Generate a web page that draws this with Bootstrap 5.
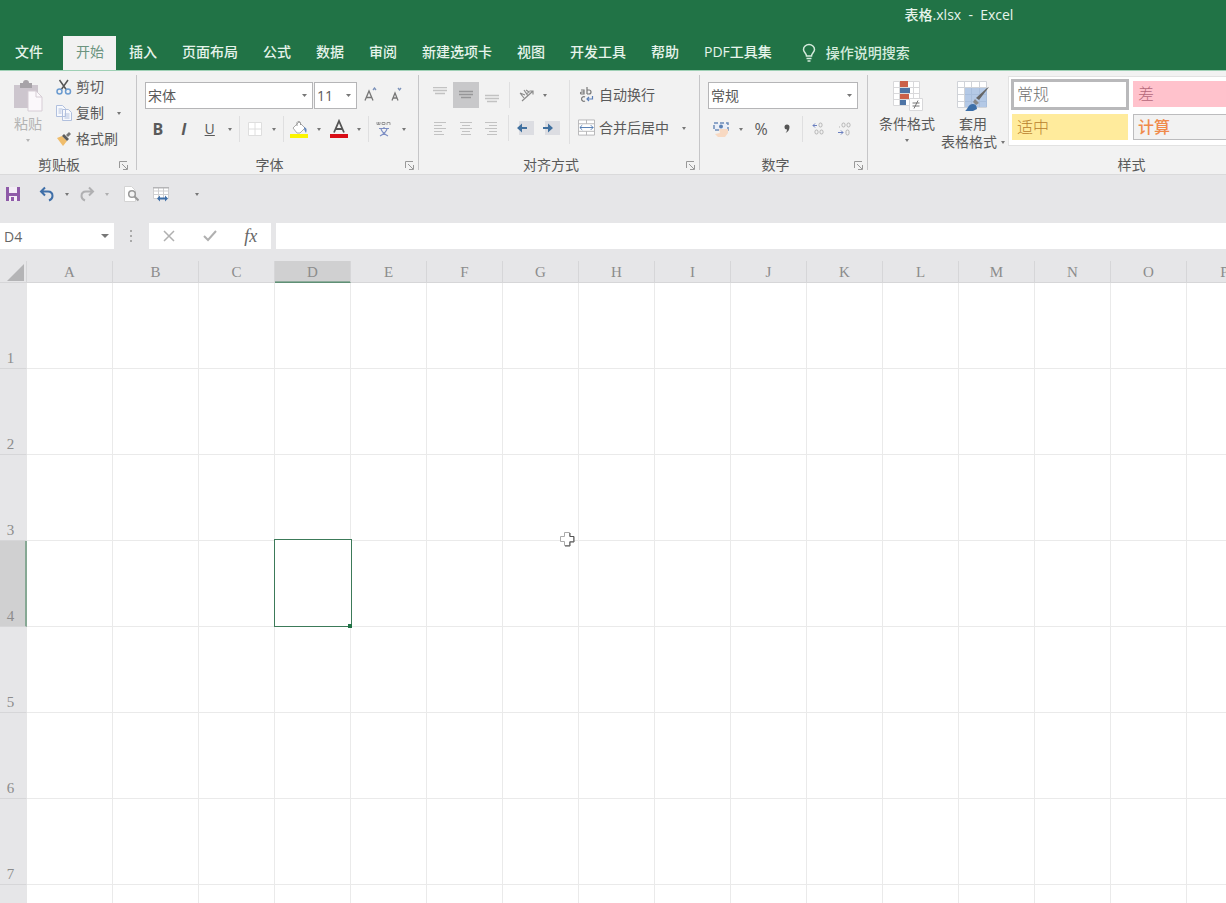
<!DOCTYPE html>
<html lang="zh-CN">
<head>
<meta charset="utf-8">
<meta name="viewport" content="width=device-width, initial-scale=1">
<title>表格.xlsx - Excel</title>
<link href="https://cdn.jsdelivr.net/npm/bootstrap@5.3.0/dist/css/bootstrap.min.css" rel="stylesheet">
<style>
  :root { --xl-green: #217346; --xl-panel: #f2f2f2; --xl-shell: #e6e6e8; --xl-ink: #5a5a5a; }
  body { font-family: "Open Sans", "Noto Sans CJK SC", sans-serif; font-size: 14px; line-height: 20px; color: var(--xl-ink); background: var(--xl-shell); }
  svg { display: block; flex: none; }
  button { color: inherit; }

  /* title and tabs */
  .xl-top { background: var(--xl-green); color: #e6f3eb; font-weight: 500; }
  .xl-title { min-width: 1918px; height: 36px; line-height: 30px; white-space: pre; }
  .xl-tabs { height: 34px; white-space: nowrap; }
  .xl-tabs .nav-link { color: #e6f3eb; height: 34px; padding: 0 12px 0 13px; line-height: 32px; border-radius: 0; }
  .xl-tabs .nav-link.xl-file { padding: 0 20px 0 15px; }
  .xl-tabs .nav-link.active { background: var(--xl-panel); color: #6c9480; font-weight: 400; }
  .xl-tellme { color: #d5ebdd; font-weight: 500; }

  /* ribbon */
  .xl-ribbon { background: var(--xl-panel); border-top: 1px solid #9fd0b5; border-bottom: 1px solid #dadadb; height: 105px; }
  .xl-group { padding: 5px 8px 0; position: relative; flex: none; }
  .xl-group + .xl-group::before { content: ""; position: absolute; left: -1px; top: 4px; bottom: 4px; border-left: 1px solid #c6c6c8; }
  .xl-body { height: 79px; }
  .xl-caption { line-height: 20px; height: 20px; margin: 0 -7px 0 -8px; }
  .xl-btn { border: 0; background: none; padding: 0; display: flex; align-items: center; justify-content: center; white-space: nowrap; line-height: 18px; }
  .xl-tool { width: 26px; height: 26px; }
  .xl-line { height: 26px; }
  .xl-tool.active { background: #c8c8ca; }
  .xl-drop { width: 14px; height: 26px; }
  .xl-drop::after, .xl-caret::after { content: ""; border: 2px solid transparent; border-top: 3px solid #777; border-bottom: 0; }
  .xl-rule { width: 1px; height: 26px; margin: 0 2px; background: #dfdfe0; }
  .xl-rule-tall { width: 1px; height: 64px; background: #dfdfe0; }
  .xl-select { appearance: none; height: 27px; border: 1px solid #b5b5b7; border-radius: 0; padding: 0 2px; color: #5a5a5a; font-size: 14px;
    background: #fff url("data:image/svg+xml,%3Csvg xmlns='http://www.w3.org/2000/svg' viewBox='0 0 5 3'%3E%3Cpath d='M0 0h5L2.5 3z' fill='%23777'/%3E%3C/svg%3E") no-repeat right 5px center / 5px 3px; }
  .xl-rows { padding-top: 6px; gap: 7px; }
  .xl-g1 { width: 137px; } .xl-g2 { width: 282px; } .xl-g3 { width: 281px; } .xl-g4 { width: 168px; } .xl-g5 { width: 528px; }
  .xl-font { width: 168px; } .xl-size { width: 43px; margin-left: 1px; } .xl-number { width: 150px; }
  .xl-align { width: 138px; }
  .xl-align .xl-drop { width: 10px; }
  .xl-paste { width: 40px; color: #b4b4b4; padding-top: 4px; }
  .xl-paste.xl-caret-off::after { opacity: .5; }
  .xl-clips { margin-top: -2px; }
  .xl-clip { height: 26px; gap: 4px; }
  .xl-big { padding-top: 4px; width: 62px; }
  .xl-label { padding-top: 3px; }
  .xl-label-gap { margin-bottom: 6px; }
  .xl-gallery { width: 370px; height: 70px; background: #fff; border: 1px solid #e2e2e2; padding: 2px; gap: 5px 3px; display: grid; grid-template-columns: 118px 118px; grid-template-rows: 30px 26px; align-items: center; }
  .xl-style { height: 26px; border: 1px solid transparent; padding: 0 4px; text-align: left; font-size: 16px; line-height: 20px; font-weight: 300; margin: 0 1px; }
  .xl-style-normal { height: 31px; border: 3px solid #b9b9bb; background: #fff; color: #707070; margin: 0; padding: 0 3px; }
  .xl-style-bad { background: #ffc2cc; color: #b5687a; }
  .xl-style-neutral { background: #ffeb9c; color: #b8802c; }
  .xl-style-calc { background: #f2f2f2; border-color: #bcbcbe; color: #f08a4b; font-weight: 500; }

  /* quick access and formula bars */
  .xl-qat { height: 48px; padding: 6px 0 16px; }
  .xl-formula { height: 26px; }
  .xl-formula input { border: 0; height: 26px; background: #fff; padding: 0 4px; color: #666; border-radius: 0; }
  .xl-name { width: 114px; background: #fff; }
  .xl-dots { width: 35px; }
  .xl-fx { background: #fff; width: 122px; margin-right: 5px; }
  .xl-fx .xl-btn { flex: 1; height: 26px; }
  .xl-fx em { font: italic 18px/20px "Liberation Serif", serif; color: #666; }
  .xl-caret { display: flex; align-items: center; }
  .xl-name .xl-caret { width: 19px; justify-content: center; }
  .xl-name .xl-caret::after { border: 4px solid transparent; border-top: 4px solid #777; border-bottom: 0; }

  /* sheet */
  .xl-sheet { margin-top: 12px; position: relative; background: #fff; }
  .xl-grid { table-layout: fixed; border-collapse: separate; border-spacing: 0; width: 0; }
  .xl-grid th { background: var(--xl-shell); font: 400 15px/20px "Liberation Serif", "Noto Sans CJK SC", serif; color: #8c8c8c; text-align: center; padding: 0; border: 0 solid #d6d6d8; }
  .xl-grid thead th { height: 22px; border-width: 0 1px 1px 0; padding-top: 1px; }
  .xl-grid thead th.picked { background: #d0d0d1; border-bottom-color: #5f8f75; box-shadow: inset 0 -1px #8fac9c; }
  .xl-grid tbody th { height: 86px; vertical-align: bottom; border-width: 0 1px 1px 0; border-right-color: #e6e6e7; padding-right: 5px; }
  .xl-grid tbody th.picked { background: #d0d0d1; border-right: 2px solid #86a894; padding-right: 4px; }
  .xl-grid td { padding: 0; border: 0 solid #eaeaea; border-width: 0 1px 1px 0; position: relative; }
  .xl-grid td.picked::after { content: ""; position: absolute; inset: -2px -2px -1px -1px; border: 1px solid #3c7a59; box-shadow: inset 0 0 0 1px #fff; }
  .xl-handle { position: absolute; right: -2px; bottom: -2px; width: 4px; height: 4px; background: var(--xl-green); z-index: 1; }
  .xl-pointer { position: absolute; left: 558px; top: 269px; }
</style>
</head>
<body>
<div class="vh-100 d-flex flex-column overflow-hidden">

  <header class="xl-top flex-shrink-0">
    <div class="overflow-hidden"><div class="xl-title text-center">表格.xlsx  -  Excel</div></div>
    <nav class="nav xl-tabs flex-nowrap overflow-hidden">
      <a class="nav-link xl-file" href="#">文件</a>
      <a class="nav-link active" href="#" aria-current="page">开始</a>
      <a class="nav-link" href="#">插入</a>
      <a class="nav-link" href="#">页面布局</a>
      <a class="nav-link" href="#">公式</a>
      <a class="nav-link" href="#">数据</a>
      <a class="nav-link" href="#">审阅</a>
      <a class="nav-link" href="#">新建选项卡</a>
      <a class="nav-link" href="#">视图</a>
      <a class="nav-link" href="#">开发工具</a>
      <a class="nav-link" href="#">帮助</a>
      <a class="nav-link" href="#">PDF工具集</a>
      <button class="xl-btn xl-tellme ms-3" type="button">
        <svg class="me-2" width="18" height="20" viewBox="0 0 18 20" fill="none" stroke="#d5ebdd" stroke-width="1.5"><path d="M6.500 13c0-3-3-3.500-3-6.500a5.500 5 0 0 1 11 0c0 3-3 3.500-3 6.500zM6.500 15.500h5M7.500 18h3"/></svg>操作说明搜索
      </button>
    </nav>
  </header>

  <section class="xl-ribbon d-flex flex-shrink-0 overflow-hidden">
    <div class="xl-group xl-g1">
      <div class="xl-body d-flex">
        <button class="xl-btn xl-paste flex-column justify-content-start" type="button">
          <svg width="30" height="32" viewBox="0 0 30 32"><path d="M1 5h24v23H1z" fill="#cdc6ce"/><path d="M7 3h3a3 3 0 0 1 6 0h3v5H7z" fill="#a7a3a8"/><path d="M15 11h8l6 6v14H15z" fill="#fbf8fb" stroke="#d6cdd5"/><path d="M23 11v6h6" fill="none" stroke="#d6cdd5"/></svg>
          <span class="xl-label xl-label-gap">粘贴</span><span class="xl-caret opacity-50"></span>
        </button>
        <div class="xl-clips ms-2">
          <button class="xl-btn xl-clip" type="button"><svg width="16" height="16" viewBox="0 0 16 16" fill="none" stroke-width="1.5"><path d="M3.500 1l7 10M12 1L5 11" stroke="#555"/><circle cx="3.500" cy="12.500" r="2.500" stroke="#6b9bd0"/><circle cx="12" cy="12.500" r="2.500" stroke="#6b9bd0"/></svg>剪切</button>
          <div class="d-flex">
            <button class="xl-btn xl-clip" type="button"><svg width="16" height="16" viewBox="0 0 16 16" fill="#f7f9fd" stroke="#b1c0de"><path d="M.500.500h6l3 3v8h-9zM6.500 4.500h6l3 3v8h-9z"/><path d="M2.500 4h4M2.500 6h3M2.500 8h3M8.500 9h5M8.500 11h5M8.500 13h5"/></svg>复制</button>
            <button class="xl-btn xl-drop ms-2" type="button" aria-label="复制选项"></button>
          </div>
          <button class="xl-btn xl-clip" type="button"><svg width="16" height="16" viewBox="0 0 16 16"><path d="M1 7l5-2 5 5-4 5z" fill="#f0bd6c"/><path d="M6 5l2-2 5 5-2 2z" fill="#5c5c5c"/><path d="M10 4l3-3 2 2-3 3z" fill="#777"/></svg>格式刷</button>
        </div>
      </div>
      <div class="xl-caption d-flex"><span class="flex-grow-1 text-center">剪贴板</span>
        <button class="xl-btn me-1" type="button" aria-label="剪贴板设置"><svg width="14" height="12" viewBox="2 0 14 12" fill="none" stroke="#999"><path d="M3.500 9V2.500H11M6 5l5 5M11.500 6v4.500H7"/></svg></button></div>
    </div>

    <div class="xl-group xl-g2">
      <div class="xl-body xl-rows d-flex flex-column">
        <div class="d-flex">
          <select class="xl-select xl-font" aria-label="字体"><option>宋体</option></select>
          <select class="xl-select xl-size" aria-label="字号"><option>11</option></select>
          <button class="xl-btn xl-tool" type="button" aria-label="增大字号"><svg width="16" height="16" viewBox="0 0 16 16" fill="none" stroke="#777" stroke-width="1.300"><path d="M3 13.500L7 4l4 9.500M4.500 10.500h5"/><path d="M11 3l1.500-2L14 3" stroke="#7d93bb"/></svg></button>
          <button class="xl-btn xl-tool" type="button" aria-label="减小字号"><svg width="16" height="16" viewBox="0 0 16 16" fill="none" stroke="#777" stroke-width="1.300"><path d="M4 13.500L7 6l3 7.500M5 11h4"/><path d="M10 1l1.500 2L13 1" stroke="#7d93bb"/></svg></button>
        </div>
        <div class="d-flex">
          <button class="xl-btn xl-tool fs-6 fw-bold" type="button">B</button>
          <button class="xl-btn xl-tool fs-6 fw-bold fst-italic" type="button">I</button>
          <button class="xl-btn xl-tool text-decoration-underline" type="button">U</button>
          <button class="xl-btn xl-drop" type="button" aria-label="下划线选项"></button>
          <span class="xl-rule"></span>
          <button class="xl-btn xl-tool" type="button" aria-label="边框"><svg width="16" height="16" viewBox="0 0 16 16" fill="#fff" stroke="#dedede"><path d="M1.500 1.500h13v13h-13zM8 1.500v13M1.500 8h13"/></svg></button>
          <button class="xl-btn xl-drop" type="button" aria-label="边框选项"></button>
          <span class="xl-rule"></span>
          <button class="xl-btn xl-tool" type="button" aria-label="填充颜色"><svg width="20" height="20" viewBox="0 0 20 20"><path d="M4 9l6-6 6 6-5 5H8z" fill="#fff" stroke="#aaa"/><path d="M8 7V3.500a2 2 0 0 1 3.500 0V6" fill="none" stroke="#999"/><path d="M15 8c3 1 3 3 2 6-1-2-2-3-2-6z" fill="#6287bd"/><path d="M1 15h18v4H1z" fill="#fbf400"/></svg></button>
          <button class="xl-btn xl-drop" type="button" aria-label="填充颜色选项"></button>
          <button class="xl-btn xl-tool" type="button" aria-label="字体颜色"><svg width="20" height="20" viewBox="0 0 20 20"><path d="M5 13.500L10 2l5 11.500M6.500 10h7" fill="none" stroke="#555" stroke-width="1.800"/><path d="M1 15h18v4H1z" fill="#d90d16"/></svg></button>
          <button class="xl-btn xl-drop" type="button" aria-label="字体颜色选项"></button>
          <span class="xl-rule"></span>
          <button class="xl-btn xl-tool" type="button" aria-label="拼音指南"><svg width="16" height="18" viewBox="0 0 16 18" fill="none"><path d="M1 2v2.500h3V2M2.500 2v2.500M6 2.500h3v2H6zM11 5V2.500h3V5" stroke="#999"/><path d="M3 8.500h10M8 7v2M5 9c1 3 3 5 7 7M11 9c-1 3-3 5-7 7" stroke="#7d8fc4" stroke-width="1.200"/></svg></button>
          <button class="xl-btn xl-drop" type="button" aria-label="拼音选项"></button>
        </div>
      </div>
      <div class="xl-caption d-flex"><span class="flex-grow-1 text-center">字体</span>
        <button class="xl-btn" type="button" aria-label="字体设置"><svg width="16" height="12" viewBox="0 0 16 12" fill="none" stroke="#999"><path d="M3.500 9V2.500H11M6 5l5 5M11.500 6v4.500H7"/></svg></button></div>
    </div>

    <div class="xl-group xl-g3">
      <div class="xl-body d-flex">
        <div class="xl-rows xl-align d-flex flex-column">
          <div class="d-flex">
            <button class="xl-btn xl-tool" type="button" aria-label="顶端对齐"><svg width="14" height="16" stroke="#c2c2c2"><path d="M0 .500h14M0 3.500h14M2 6.500h10" stroke-width="1.500"/></svg></button>
            <button class="xl-btn xl-tool active" type="button" aria-label="垂直居中"><svg width="14" height="16" stroke="#969698"><path d="M0 4.500h14M0 7.500h14M2 10.500h10" stroke-width="1.500"/></svg></button>
            <button class="xl-btn xl-tool" type="button" aria-label="底端对齐"><svg width="14" height="16" stroke="#c2c2c2"><path d="M0 8.500h14M0 11.500h14M2 14.500h10" stroke-width="1.500"/></svg></button>
            <span class="xl-rule mx-1"></span>
            <button class="xl-btn xl-tool" type="button" aria-label="方向"><svg width="18" height="16" viewBox="0 0 18 16" fill="none" stroke="#8b8b8b" stroke-width="1.200"><path d="M2 6l4 5M2 6l5 2M6 3l4 6M8 3l3 2-3 2M4 14L15 4M11.500 4H15v3.500"/></svg></button>
            <button class="xl-btn xl-drop" type="button" aria-label="方向选项"></button>
          </div>
          <div class="d-flex">
            <button class="xl-btn xl-tool" type="button" aria-label="左对齐"><svg width="14" height="16" stroke="#c2c2c2"><path d="M1 2.500h12M1 5.500h8M1 8.500h12M1 11.500h8M1 14.500h10"/></svg></button>
            <button class="xl-btn xl-tool" type="button" aria-label="居中"><svg width="14" height="16" stroke="#c2c2c2"><path d="M1 2.500h12M3 5.500h8M1 8.500h12M3 11.500h8M2 14.500h10"/></svg></button>
            <button class="xl-btn xl-tool" type="button" aria-label="右对齐"><svg width="14" height="16" stroke="#c2c2c2"><path d="M1 2.500h12M5 5.500h8M1 8.500h12M5 11.500h8M3 14.500h10"/></svg></button>
            <span class="xl-rule mx-1"></span>
            <button class="xl-btn xl-tool" type="button" aria-label="减少缩进"><svg width="18" height="16" viewBox="0 0 18 16"><path d="M2 1h15v14H2z" fill="#dcdde2"/><path d="M0 8l5-4.500V7h5v2H5v3.500z" fill="#40709f"/></svg></button>
            <button class="xl-btn xl-tool" type="button" aria-label="增加缩进"><svg width="18" height="16" viewBox="0 0 18 16"><path d="M2 1h15v14H2z" fill="#dcdde2"/><path d="M10 8L5 3.500V7H0v2h5v3.500z" fill="#40709f"/></svg></button>
          </div>
        </div>
        <div class="pt-1 ms-1 flex-shrink-0"><span class="xl-rule-tall d-block"></span></div>
        <div class="xl-rows d-flex flex-column ms-2">
          <button class="xl-btn xl-line justify-content-start" type="button"><svg class="me-1" width="17" height="18" viewBox="1 0 17 18" fill="none" stroke="#777" stroke-width="1.200"><path d="M4 4h3v4H4.500a1 1 0 0 1 0-2H7M10 1v7M10 4h2a2 2 0 0 1 0 4h-2M8 11a2.300 2.300 0 1 0 0 4"/><path d="M15.500 10v3H10M12 11l-2 2 2 2" stroke="#5b7fb8"/></svg>自动换行</button>
          <div class="d-flex">
            <button class="xl-btn xl-line" type="button"><svg class="me-1" width="17" height="18" viewBox="0 0 18 18" fill="#fff" stroke="#b5b5b7"><path d="M.500.500h17v16H.500zM.500 4.500h17M.500 12.500h17M9 .500v4M9 12.500v4"/><path d="M2 8.500h14M4.500 6L2 8.500 4.500 11M13.500 6L16 8.500 13.500 11" fill="none" stroke="#5079b0"/></svg>合并后居中</button>
            <button class="xl-btn xl-drop ms-2" type="button" aria-label="合并选项"></button>
          </div>
        </div>
      </div>
      <div class="xl-caption d-flex"><span class="flex-grow-1 text-center">对齐方式</span>
        <button class="xl-btn" type="button" aria-label="对齐设置"><svg width="16" height="12" viewBox="0 0 16 12" fill="none" stroke="#999"><path d="M3.500 9V2.500H11M6 5l5 5M11.500 6v4.500H7"/></svg></button></div>
    </div>

    <div class="xl-group xl-g4">
      <div class="xl-body xl-rows d-flex flex-column">
        <select class="xl-select xl-number" aria-label="数字格式"><option>常规</option></select>
        <div class="d-flex">
          <button class="xl-btn xl-tool" type="button" aria-label="会计数字格式"><svg width="18" height="18" viewBox="0 0 18 18"><path d="M2 3h14v7H2z" fill="#e9eef7" stroke="#6c8cb9" stroke-width="1.500" stroke-dasharray="4 2"/><circle cx="9" cy="6.500" r="2" fill="#5d81b3"/><path d="M7 9h9v4l-3 4H6l-3-3 5-1z" fill="#f8d9c2"/></svg></button>
          <button class="xl-btn xl-drop" type="button" aria-label="货币选项"></button>
          <button class="xl-btn xl-tool fs-6" type="button">%</button>
          <button class="xl-btn xl-tool" type="button" aria-label="千位分隔样式"><svg width="8" height="12" viewBox="0 0 8 12"><path d="M4 1.500a2.500 2.500 0 0 1 2.500 2.500c0 3-1.500 5-4 6 1-1.200 1.500-2.200 1.500-3.500A2.500 2.500 0 0 1 4 1.500z" fill="#555"/></svg></button>
          <span class="xl-rule"></span>
          <button class="xl-btn xl-tool" type="button" aria-label="增加小数位数"><svg width="14" height="16" viewBox="0 0 14 16" fill="none" stroke="#b3b3b3"><path d="M6 4.500H2M4 2.500l-2 2 2 2" stroke="#6a7fc0"/><rect x="8" y="2" width="3" height="4" rx="1.500"/><rect x="4" y="9" width="3" height="4" rx="1.500"/><rect x="9" y="9" width="3" height="4" rx="1.500"/></svg></button>
          <button class="xl-btn xl-tool" type="button" aria-label="减少小数位数"><svg width="16" height="16" viewBox="0 0 16 16" fill="none" stroke="#b3b3b3"><rect x="6" y="2" width="3" height="4" rx="1.500"/><rect x="11" y="2" width="3" height="4" rx="1.500"/><path d="M3 6h1"/><path d="M2 11.500h5M5 9.500l2 2-2 2" stroke="#6a7fc0"/><rect x="10" y="9" width="3" height="5" rx="1.500"/></svg></button>
        </div>
      </div>
      <div class="xl-caption d-flex"><span class="flex-grow-1 text-center">数字</span>
        <button class="xl-btn" type="button" aria-label="数字设置"><svg width="16" height="12" viewBox="0 0 16 12" fill="none" stroke="#999"><path d="M3.500 9V2.500H11M6 5l5 5M11.500 6v4.500H7"/></svg></button></div>
    </div>

    <div class="xl-group xl-g5">
      <div class="xl-body d-flex">
        <button class="xl-btn xl-big flex-column justify-content-start" type="button">
          <svg width="32" height="32" viewBox="0 0 32 32"><path d="M2.500 1.500h26v24h-26zM2.500 7.500h26M2.500 13.500h26M2.500 19.500h26M8.500 1.500v24M22.500 1.500v24" fill="#fff" stroke="#d8d8da"/><path d="M9 1h8v6H9zM9 14h9v5H9z" fill="#cb6149"/><path d="M9 8h10v5H9zM9 20h6v5H9z" fill="#4d74a5"/><path d="M18.500 18.500h13v12h-13z" fill="#fff" stroke="#d8d8da"/><path d="M21.500 23h7M21.500 26h7M27 20.500l-4 8" stroke="#777" fill="none"/></svg>
          <span class="xl-label xl-label-gap">条件格式</span><span class="xl-caret"></span>
        </button>
        <button class="xl-btn xl-big flex-column justify-content-start ms-1" type="button">
          <svg width="34" height="32" viewBox="0 0 34 32"><path d="M1.500 1.500h29v26h-29zM1.500 7.500h29M1.500 14.500h29M1.500 21.500h29M8.500 1.500v26M15.500 1.500v26M23.500 1.500v26" fill="#fff" stroke="#d0d3d8"/><path d="M9 8h22v19H9z" fill="#9bb7de" opacity=".75"/><path d="M33 7l-10 13-3-2L31 8z" fill="#666"/><path d="M19 19l4 4-3 2-3-3z" fill="#888"/><path d="M9 31c3-2 3-7 8-7 3 0 4 3 4 5l-4 2z" fill="#3b6ea8"/></svg>
          <span class="xl-label">套用</span><span class="d-flex xl-caret gap-1">表格格式</span>
        </button>
        <div class="xl-gallery ms-1">
          <button class="xl-style xl-style-normal" type="button">常规</button>
          <button class="xl-style xl-style-bad" type="button">差</button>
          <button class="xl-style xl-style-neutral" type="button">适中</button>
          <button class="xl-style xl-style-calc" type="button">计算</button>
        </div>
      </div>
      <div class="xl-caption text-center">样式</div>
    </div>
  </section>

  <div class="xl-qat d-flex flex-shrink-0">
    <button class="xl-btn xl-tool" type="button" aria-label="保存"><svg width="14" height="14" viewBox="0 0 14 14"><path d="M0 0h14v14H0z" fill="#8e5aa8"/><path d="M3 0h8v6H3zM3 9h8v5H3z" fill="#f3edf6"/><path d="M5 10h3v4H5z" fill="#8e5aa8"/></svg></button>
    <button class="xl-btn xl-tool ms-2" type="button" aria-label="撤消"><svg width="16" height="16" viewBox="0 0 16 16" fill="none" stroke="#3f6fa8" stroke-width="2"><path d="M6 1.500L2 5.500l4 4M2.500 5.500H9c3 0 4.500 2 4.500 4.500 0 2-1 3.500-3.500 4.500"/></svg></button>
    <button class="xl-btn xl-drop" type="button" aria-label="撤消选项"></button>
    <button class="xl-btn xl-tool" type="button" aria-label="恢复"><svg width="16" height="16" viewBox="0 0 16 16" fill="none" stroke="#b0b0b2" stroke-width="2"><path d="M10 1.500l4 4-4 4M13.500 5.500H7C4 5.500 2.500 7.500 2.500 10c0 2 1 3.500 3.500 4.500"/></svg></button>
    <button class="xl-btn xl-drop opacity-50" type="button" aria-label="恢复选项"></button>
    <button class="xl-btn xl-tool ms-1" type="button" aria-label="打印预览"><svg width="16" height="16" viewBox="0 0 16 16"><path d="M1.500.500h7l4 4v11h-11z" fill="#fff" stroke="#d4d4d4"/><circle cx="9" cy="8" r="3.300" fill="#f4f4f4" stroke="#999" stroke-width="1.500"/><path d="M11.500 10.500l4 4" stroke="#999" stroke-width="2"/></svg></button>
    <button class="xl-btn xl-tool ms-1" type="button" aria-label="列宽"><svg width="18" height="18" viewBox="0 0 18 18"><path d="M1.500 2.500h15v11h-15zM1.500 6h15M1.500 9.500h15M6.500 2.500v11M11.500 2.500v11" fill="#fff" stroke="#cfcfd1"/><path d="M1 2h16v1.500H1z" fill="#b5b5b7"/><path d="M5 13.500l3-3v2h5v-2l3 3-3 3v-2H8v2z" fill="#3f6fa8"/></svg></button>
    <button class="xl-btn xl-drop ms-3" type="button" aria-label="自定义快速访问工具栏"></button>
  </div>

  <div class="xl-formula d-flex flex-shrink-0">
    <div class="xl-name d-flex">
      <input class="flex-grow-1 w-50" type="text" value="D4" aria-label="名称框">
      <button class="xl-btn xl-caret" type="button" aria-label="名称列表"></button>
    </div>
    <div class="xl-dots d-flex align-items-center justify-content-center"><svg width="3" height="14" fill="#aaa"><path d="M0 1h2v2H0zM0 6h2v2H0zM0 11h2v2H0z"/></svg></div>
    <div class="xl-fx d-flex">
      <button class="xl-btn" type="button" aria-label="取消"><svg width="12" height="12" stroke="#b0b0b0" stroke-width="1.500"><path d="M1 1l10 10M11 1L1 11"/></svg></button>
      <button class="xl-btn" type="button" aria-label="输入"><svg width="14" height="12" fill="none" stroke="#b0b0b0" stroke-width="2"><path d="M1 6l4 4 8-9"/></svg></button>
      <button class="xl-btn" type="button" aria-label="插入函数"><em>fx</em></button>
    </div>
    <input class="flex-grow-1" type="text" aria-label="编辑栏">
  </div>

  <main class="xl-sheet flex-grow-1 overflow-hidden">
    <table class="xl-grid"><colgroup></colgroup><thead><tr></tr></thead><tbody></tbody></table>
    <svg class="xl-pointer" width="18" height="18" viewBox="0 0 18 18"><path d="M6.500 2.500h5v4h4v5h-4v4h-5v-4h-4v-5h4z" fill="#fff" stroke="#aaa"/><path d="M12 3v3.500h4V12h-4v4H7" fill="none" stroke="#555"/></svg>
  </main>
</div>

<script src="https://cdn.jsdelivr.net/npm/bootstrap@5.3.0/dist/js/bootstrap.bundle.min.js"></script>
<script>
  const active = { col: "D", row: 4 };
  const sheet = document.querySelector(".xl-sheet");
  const grid = sheet.querySelector(".xl-grid");
  const mark = on => on ? ' class="picked"' : "";
  const width = i => i < 2 ? 86 : 76;
  const name = i => (i < 26 ? "" : name(Math.floor(i / 26) - 1)) + String.fromCharCode(65 + i % 26);

  // Build as many columns and rows as the visible sheet needs.
  function draw() {
    const cols = [];
    for (let x = 27, i = 0; x < sheet.clientWidth; x += width(i), i++) cols.push(name(i));
    const count = Math.ceil((sheet.clientHeight - 22) / 86);
    grid.querySelector("colgroup").innerHTML = '<col style="width:27px">' +
      cols.map((c, i) => `<col style="width:${width(i)}px">`).join("");
    grid.querySelector("thead tr").innerHTML =
      '<th aria-label="全选"><svg class="ms-auto" width="20" height="19"><path d="M18 1v17H1z" fill="#b4b4b6"/></svg></th>' +
      cols.map(c => `<th scope="col"${mark(c === active.col)}>${c}</th>`).join("");
    let rows = "";
    for (let r = 1; r <= count; r++) {
      rows += `<tr><th scope="row"${mark(r === active.row)}>${r}</th>` + cols.map(c => {
        const on = r === active.row && c === active.col;
        return `<td${mark(on)}>${on ? '<span class="xl-handle"></span>' : ""}</td>`;
      }).join("") + "</tr>";
    }
    grid.querySelector("tbody").innerHTML = rows;
  }
  draw();
  window.addEventListener("resize", draw);
</script>
</body>
</html>
